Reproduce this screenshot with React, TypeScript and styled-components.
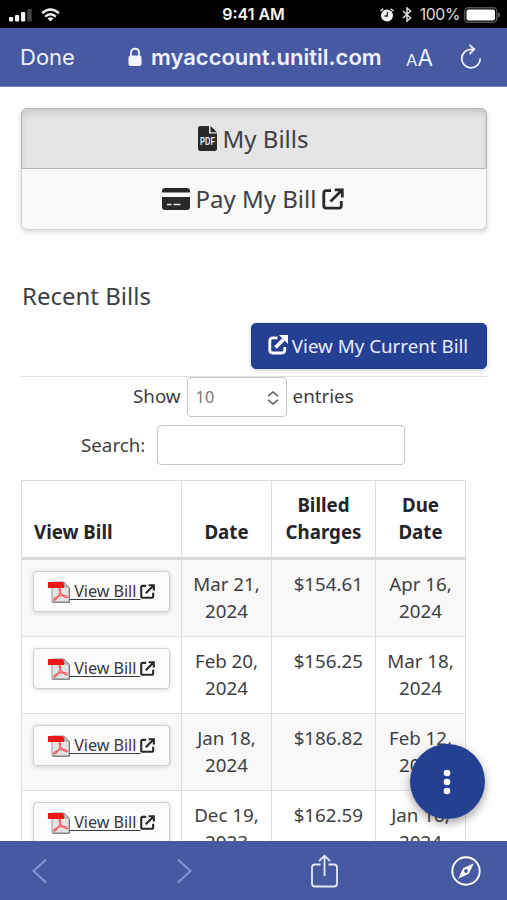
import React from 'react';
import styled, { createGlobalStyle } from 'styled-components';

const GlobalStyle = createGlobalStyle`
  * { box-sizing: border-box; }
  body { margin: 0; background: #fff; }
  svg { display: block; flex: none; }
`;

const BAR = '#475aa1';
const NAVY = '#253f93';
const SYSTEM = '"Inter", "Liberation Sans", sans-serif';

const Phone = styled.div`
  position: relative;
  width: 507px;
  height: 900px;
  display: flex;
  flex-direction: column;
  overflow: hidden;
  background: #fefefe;
  color: #3f3f42;
  font: 18.75px/27px "Noto Sans", sans-serif;
`;

const StatusBar = styled.div`
  height: 28px;
  flex: none;
  display: grid;
  grid-template-columns: 1fr auto 1fr;
  align-items: center;
  padding: 1px 7px 0 9px;
  background: #000;
  color: #f4f4f4;
  font-family: ${SYSTEM};
`;

const StatusGroup = styled.div<{ $end?: boolean }>`
  display: flex;
  align-items: center;
  justify-content: ${(p) => (p.$end ? 'flex-end' : 'flex-start')};
  gap: ${(p) => (p.$end ? 8 : 9)}px;
`;

const Clock = styled.span`
  margin-right: 2px;
  font-size: 16px;
  font-weight: 600;
`;

const Percent = styled.span`
  font-size: 15.8px;
  letter-spacing: -0.4px;
  color: #ddd;
  margin-right: -4px;
`;

const AddressBar = styled.div`
  height: 59px;
  flex: none;
  display: flex;
  align-items: center;
  padding: 0 25px 0 20px;
  background: ${BAR};
  border-bottom: 1px solid #7785ba;
  color: #eef2ff;
  font-family: ${SYSTEM};
`;

const Done = styled.span`
  width: 108px;
  padding-top: 1px;
  font-size: 22px;
`;

const Domain = styled.span`
  width: 264px;
  padding: 1px 0 0 9px;
  font-size: 22px;
  font-weight: 600;
  white-space: nowrap;
`;

const TextSize = styled.span`
  flex: 1;
  padding-top: 4px;
  font-size: 22.5px;
  white-space: nowrap;
  small { font-size: 16.5px; }
`;

const Page = styled.main`
  flex: 1;
  min-height: 0;
  overflow: hidden;
  padding: 21px 20px 0 21px;
`;

const TabGroup = styled.div`
  height: 122px;
  border-radius: 6px;
  box-shadow: 0 2px 5px rgba(0, 0, 0, 0.16);
`;

const Tab = styled.div<{ $active?: boolean }>`
  height: 61px;
  display: flex;
  align-items: center;
  justify-content: center;
  gap: 6px;
  padding-right: 2px;
  font-size: 24px;
  line-height: 34px;
  border: 1px solid ${(p) => (p.$active ? '#b5b5b5' : '#d2d2d2')};
  border-top-width: ${(p) => (p.$active ? 1 : 0)}px;
  border-radius: ${(p) => (p.$active ? '6px 6px 0 0' : '0 0 6px 6px')};
  background: ${(p) => (p.$active ? '#e5e5e5' : '#f9f9f9')};
  box-shadow: ${(p) => (p.$active ? 'inset 0 4px 6px rgba(0,0,0,.12)' : 'none')};
`;

const Heading = styled.h2`
  margin: 49px 0 0 1px;
  font-size: 24px;
  line-height: 34px;
  font-weight: 400;
`;

const Actions = styled.div`
  display: flex;
  justify-content: flex-end;
  margin-top: 10px;
  height: 54px;
  border-bottom: 1px solid #dedede;
`;

const PrimaryButton = styled.button`
  width: 236px;
  height: 46px;
  display: flex;
  align-items: center;
  justify-content: center;
  gap: 4px;
  padding: 0 2px 2px 0;
  border: 1px solid #203a8c;
  border-radius: 5px;
  background: ${NAVY};
  color: #e9edff;
  font: inherit;
  white-space: nowrap;
  box-shadow: 0 1px 4px rgba(37, 63, 147, 0.25);
`;

const Field = styled.label<{ $indent: number; $gap: number }>`
  display: flex;
  align-items: center;
  gap: ${(p) => p.$gap}px;
  height: 40px;
  padding-left: ${(p) => p.$indent}px;
  & + & { margin-top: 8px; }
`;

const FieldText = styled.span<{ $lift: number }>`
  padding-bottom: ${(p) => p.$lift}px;
`;

const Select = styled.span`
  width: 100px;
  height: 40px;
  display: flex;
  align-items: center;
  justify-content: space-between;
  padding: 1px 7px 0 8px;
  border: 1px solid #c6c6c6;
  border-radius: 4px;
  background: #fff;
  color: #777;
  font-size: 16.3px;
`;

const SearchInput = styled.input`
  width: 248px;
  height: 40px;
  border: 1px solid #c6c6c6;
  border-radius: 4px;
  background: #fff;
`;

const Table = styled.table`
  margin-top: 15px;
  width: 445px;
  table-layout: fixed;
  border-collapse: separate;
  border-spacing: 0;
  border-top: 1px solid #ddd;
  border-left: 1px solid #ddd;
`;

const HeadCell = styled.th<{ $width: number; $left?: boolean }>`
  width: ${(p) => p.$width}px;
  height: 79px;
  padding: 10px 8px 12px ${(p) => (p.$left ? 12 : 8)}px;
  vertical-align: bottom;
  text-align: ${(p) => (p.$left ? 'left' : 'center')};
  font-size: 18.7px;
  color: #242429;
  border-right: 1px solid #ddd;
  border-bottom: 3px solid #d9d9d9;
`;

const Row = styled.tr`
  background: #fff;
  &:nth-child(odd) { background: #f8f8f8; }
`;

const Cell = styled.td<{ $align?: 'left' | 'right' | 'center' }>`
  height: 77px;
  padding: ${(p) => (p.$align === 'left' ? 11 : 10)}px ${(p) => (p.$align === 'right' ? 12 : 6)}px 11px
    ${(p) => (p.$align === 'left' ? 11 : 6)}px;
  vertical-align: top;
  text-align: ${(p) => p.$align ?? 'center'};
  border-right: 1px solid #ddd;
  border-bottom: 1px solid #ddd;
`;

const BillButton = styled.a`
  width: 137px;
  height: 41px;
  display: flex;
  align-items: center;
  padding: 0 0 0 14px;
  border: 1px solid #cfcfcf;
  border-radius: 4px;
  background: #fbfbfb;
  box-shadow: 0 1px 4px rgba(0, 0, 0, 0.16);
  color: #3a3a3c;
  font-size: 16.2px;
  white-space: pre;
`;

const BillLabel = styled.span`
  letter-spacing: -0.06px;
  text-decoration: underline;
  text-decoration-thickness: 1px;
  text-underline-offset: 2px;
`;

const MoreButton = styled.button`
  position: absolute;
  left: 410px;
  top: 744px;
  width: 75px;
  height: 75px;
  display: grid;
  place-items: center;
  padding: 0 1px 0 0;
  border: 0;
  border-radius: 50%;
  background: ${NAVY};
  box-shadow: 0 4px 10px rgba(0, 0, 0, 0.36);
`;

const Toolbar = styled.nav`
  height: 59px;
  flex: none;
  display: grid;
  grid-template-columns: 145px 134px 140px 30px;
  align-items: center;
  padding-left: 32px;
  background: ${BAR};
`;

const LinkIcon = ({ size, width = 2.8 }: { size: number; width?: number }) => (
  <svg width={size} height={size} viewBox="0 0 22 22" fill="none" stroke="#29292b" strokeWidth={width}>
    <path d="M9 2.7H4.2Q1.8 2.7 1.8 5.1v12.7q0 2.4 2.4 2.4h12.7q2.4 0 2.4-2.4V13" />
    <path d="M8.5 13.5L19.5 2.5M12.7 1.8h7.6v7.6" />
  </svg>
);

const ShareLinkIcon = () => (
  <svg width="20" height="20" viewBox="0 0 20 20" fill="none" stroke="#fff" strokeWidth="2.8">
    <path d="M9.500 2.900H5Q1.800 2.900 1.800 6v9q0 3 3 3h9q3 0 3-3v-3" />
    <path d="M7.500 12.500L15.500 4.500" strokeWidth="3.8" />
    <path d="M11 0h9v9z" fill="#fff" stroke="none" />
  </svg>
);

const FileIcon = () => (
  <svg width="19" height="25" viewBox="0 0 19 25">
    <path d="M2.500 0H11v7.500h8V22.500q0 2.500-2.500 2.500h-14Q0 25 0 22.500v-20Q0 0 2.500 0z" fill="#29292b" />
    <path d="M12.500 0L19 6.300h-6.500z" fill="#29292b" />
    <text x="9.500" y="18.600" textAnchor="middle" textLength="15" lengthAdjust="spacingAndGlyphs" fontFamily="Liberation Sans, sans-serif" fontWeight="700" fontSize="10" fill="#e5e5e5">PDF</text>
  </svg>
);

const CardIcon = () => (
  <svg width="28" height="22" viewBox="0 0 28 22">
    <path d="M3 0h22q3 0 3 3v1.500H0V3Q0 0 3 0zM0 9h28v10q0 3-3 3H3q-3 0-3-3z" fill="#29292b" />
    <path d="M5 16.500h4.500M11.500 16.500h7" stroke="#e8e8e8" strokeWidth="1.500" />
  </svg>
);

const AcrobatIcon = () => (
  <svg width="22" height="22" viewBox="0 0 22 22">
    <path d="M4 1h12l5 5v15H4z" fill="#e3e3e3" stroke="#999" />
    <path d="M16 1v5h5z" fill="#bdbdbd" stroke="#888" strokeWidth=".7" />
    <path d="M4.500 21.300h17V7" fill="none" stroke="#777" strokeWidth="1" />
    <path d="M11.500 7.500c2 0 .7 5-1.500 8.200-1.500 2.300-3.500 4.300-4.200 3.300-.9-1.300 4.200-4.600 9-4.600 3.500 0 5 1 4.400 2-1 1.500-5.400-1.700-7.200-5.700-.7-1.700-1.200-3.200-.5-3.200z" fill="none" stroke="#ef5b5b" strokeWidth="1.200" />
    <path d="M0 1h14q2 0 2 3v3H0z" fill="#ee1717" />
  </svg>
);

const Signal = () => (
  <svg width="23" height="14" viewBox="0 0 23 14" fill="#f2f2f2">
    <rect y="9" width="4.200" height="4.500" rx="1" />
    <rect x="6" y="7" width="4.200" height="6.500" rx="1" />
    <rect x="12" y="4" width="4.200" height="9.500" rx="1" />
    <rect x="18.500" y="1" width="4.200" height="12.500" rx="1" fill="#444" />
  </svg>
);

const Wifi = () => (
  <svg width="19" height="14" viewBox="0 0 20 15" fill="none" stroke="#f2f2f2" strokeWidth="2.600">
    <path d="M1 5.500Q10-2.500 19 5.500M4.300 9.200q5.700-4.800 11.400 0" />
    <path d="M10 14.500l-3.200-3.300q3.200-2.400 6.400 0z" fill="#f2f2f2" stroke="none" />
  </svg>
);

const Alarm = () => (
  <svg width="14" height="14" viewBox="0 0 14 14" fill="none" stroke="#f2f2f2" strokeWidth="1.300">
    <circle cx="7" cy="7.500" r="6" fill="#f2f2f2" stroke="none" />
    <path d="M.6 3L3.300.8M13.400 3L10.700.8" />
    <path d="M7.300 4v4H4.500" stroke="#222" />
  </svg>
);

const Bluetooth = () => (
  <svg width="10" height="15" viewBox="0 0 10 15" fill="none" stroke="#ddd" strokeWidth="1.500">
    <path d="M1 4l7.500 7L5 14V1l3.500 3L1 11" />
  </svg>
);

const Battery = () => (
  <svg width="36" height="16" viewBox="0 0 36 16">
    <rect x=".8" y=".8" width="32" height="14.400" rx="3.500" fill="#000" stroke="#555" strokeWidth="1.400" />
    <rect x="2.500" y="2.500" width="28.500" height="11" rx="2" fill="#fff" />
    <path d="M34 5.300q2 .8 2 2.700t-2 2.700z" fill="#666" />
  </svg>
);

const Lock = () => (
  <svg width="14" height="20" viewBox="0 0 14 20">
    <path d="M3 9V5.500C3 .5 11 .5 11 5.500V9" fill="none" stroke="#f2f5ff" strokeWidth="1.800" />
    <rect x=".5" y="8.500" width="13" height="10.500" rx="2" fill="#f2f5ff" />
  </svg>
);

const Reload = () => (
  <svg width="22" height="26" viewBox="0 0 22 26" fill="none" stroke="#edf1ff" strokeWidth="1.800">
    <path d="M13.500 5.300H11a9.300 9.300 0 1 0 9.300 9.300" />
    <path d="M9.500.8L14.300 5.300 9.500 10" />
  </svg>
);

const Chevron = ({ forward }: { forward?: boolean }) => (
  <svg width="15" height="26" viewBox="0 0 15 26" fill="none" stroke="#8599d3" strokeWidth="1.800">
    <path d={forward ? 'M1 1.500L13.500 13 1 24.500' : 'M14 1.500L1.500 13 14 24.500'} />
  </svg>
);

const Share = () => (
  <svg width="27" height="34" viewBox="0 0 27 34" fill="none" stroke="#e4eaff" strokeWidth="1.800">
    <path d="M9.500 10.500H4q-3 0-3 3v16q0 3 3 3h19q3 0 3-3v-16q0-3-3-3h-5.500" />
    <path d="M13.500 22V2M8 7.200l5.500-5.500L19 7.200" />
  </svg>
);

const Compass = () => (
  <svg width="30" height="30" viewBox="0 0 30 30">
    <circle cx="15" cy="15" r="13.700" fill="none" stroke="#fff" strokeWidth="1.900" />
    <path d="M22.800 7.200L17.800 17.800 7.200 22.800 12.200 12.200z" fill="#fff" />
    <circle cx="15" cy="15" r="1.900" fill={BAR} />
  </svg>
);

const Sort = () => (
  <svg width="12" height="14" viewBox="0 0 12 14" fill="none" stroke="#555" strokeWidth="1.500">
    <path d="M1 5.200L6 1l5 4.200M1 8.800L6 13l5-4.200" />
  </svg>
);

const bills = [
  { date: ['Mar 21,', '2024'], amount: '$154.61', due: ['Apr 16,', '2024'] },
  { date: ['Feb 20,', '2024'], amount: '$156.25', due: ['Mar 18,', '2024'] },
  { date: ['Jan 18,', '2024'], amount: '$186.82', due: ['Feb 12,', '2024'] },
  { date: ['Dec 19,', '2023'], amount: '$162.59', due: ['Jan 16,', '2024'] },
];

export default function App() {
  return (
    <Phone>
      <GlobalStyle />
      <StatusBar>
        <StatusGroup><Signal /><Wifi /></StatusGroup>
        <Clock>9:41 AM</Clock>
        <StatusGroup $end><Alarm /><Bluetooth /><Percent>100%</Percent><Battery /></StatusGroup>
      </StatusBar>
      <AddressBar>
        <Done>Done</Done>
        <Lock />
        <Domain>myaccount.unitil.com</Domain>
        <TextSize><small>A</small>A</TextSize>
        <Reload />
      </AddressBar>
      <Page>
        <TabGroup>
          <Tab $active><FileIcon />My Bills</Tab>
          <Tab><CardIcon />Pay My Bill<LinkIcon size={22} /></Tab>
        </TabGroup>
        <Heading>Recent Bills</Heading>
        <Actions>
          <PrimaryButton><ShareLinkIcon />View My Current Bill</PrimaryButton>
        </Actions>
        <Field as="div" $indent={112} $gap={6}>
          <FieldText $lift={3}>Show</FieldText>
          <Select>10<Sort /></Select>
          <FieldText $lift={3}>entries</FieldText>
        </Field>
        <Field $indent={60} $gap={12}>
          <FieldText $lift={1}>Search:</FieldText>
          <SearchInput />
        </Field>
        <Table>
          <thead>
            <tr>
              <HeadCell $width={160} $left>View Bill</HeadCell>
              <HeadCell $width={90}>Date</HeadCell>
              <HeadCell $width={104}>Billed<br />Charges</HeadCell>
              <HeadCell $width={90}>Due<br />Date</HeadCell>
            </tr>
          </thead>
          <tbody>
            {bills.map((bill) => (
              <Row key={bill.amount}>
                <Cell $align="left">
                  <BillButton><AcrobatIcon /><BillLabel> View Bill </BillLabel><LinkIcon size={15} width={3.1} /></BillButton>
                </Cell>
                <Cell>{bill.date[0]}<br />{bill.date[1]}</Cell>
                <Cell $align="right">{bill.amount}</Cell>
                <Cell>{bill.due[0]}<br />{bill.due[1]}</Cell>
              </Row>
            ))}
          </tbody>
        </Table>
      </Page>
      <Toolbar>
        <Chevron />
        <Chevron forward />
        <Share />
        <Compass />
      </Toolbar>
      <MoreButton>
        <svg width="8" height="26" viewBox="0 0 8 26" fill="#fff">
          <circle cx="4" cy="4" r="3.300" />
          <circle cx="4" cy="13" r="3.300" />
          <circle cx="4" cy="22" r="3.300" />
        </svg>
      </MoreButton>
    </Phone>
  );
}
